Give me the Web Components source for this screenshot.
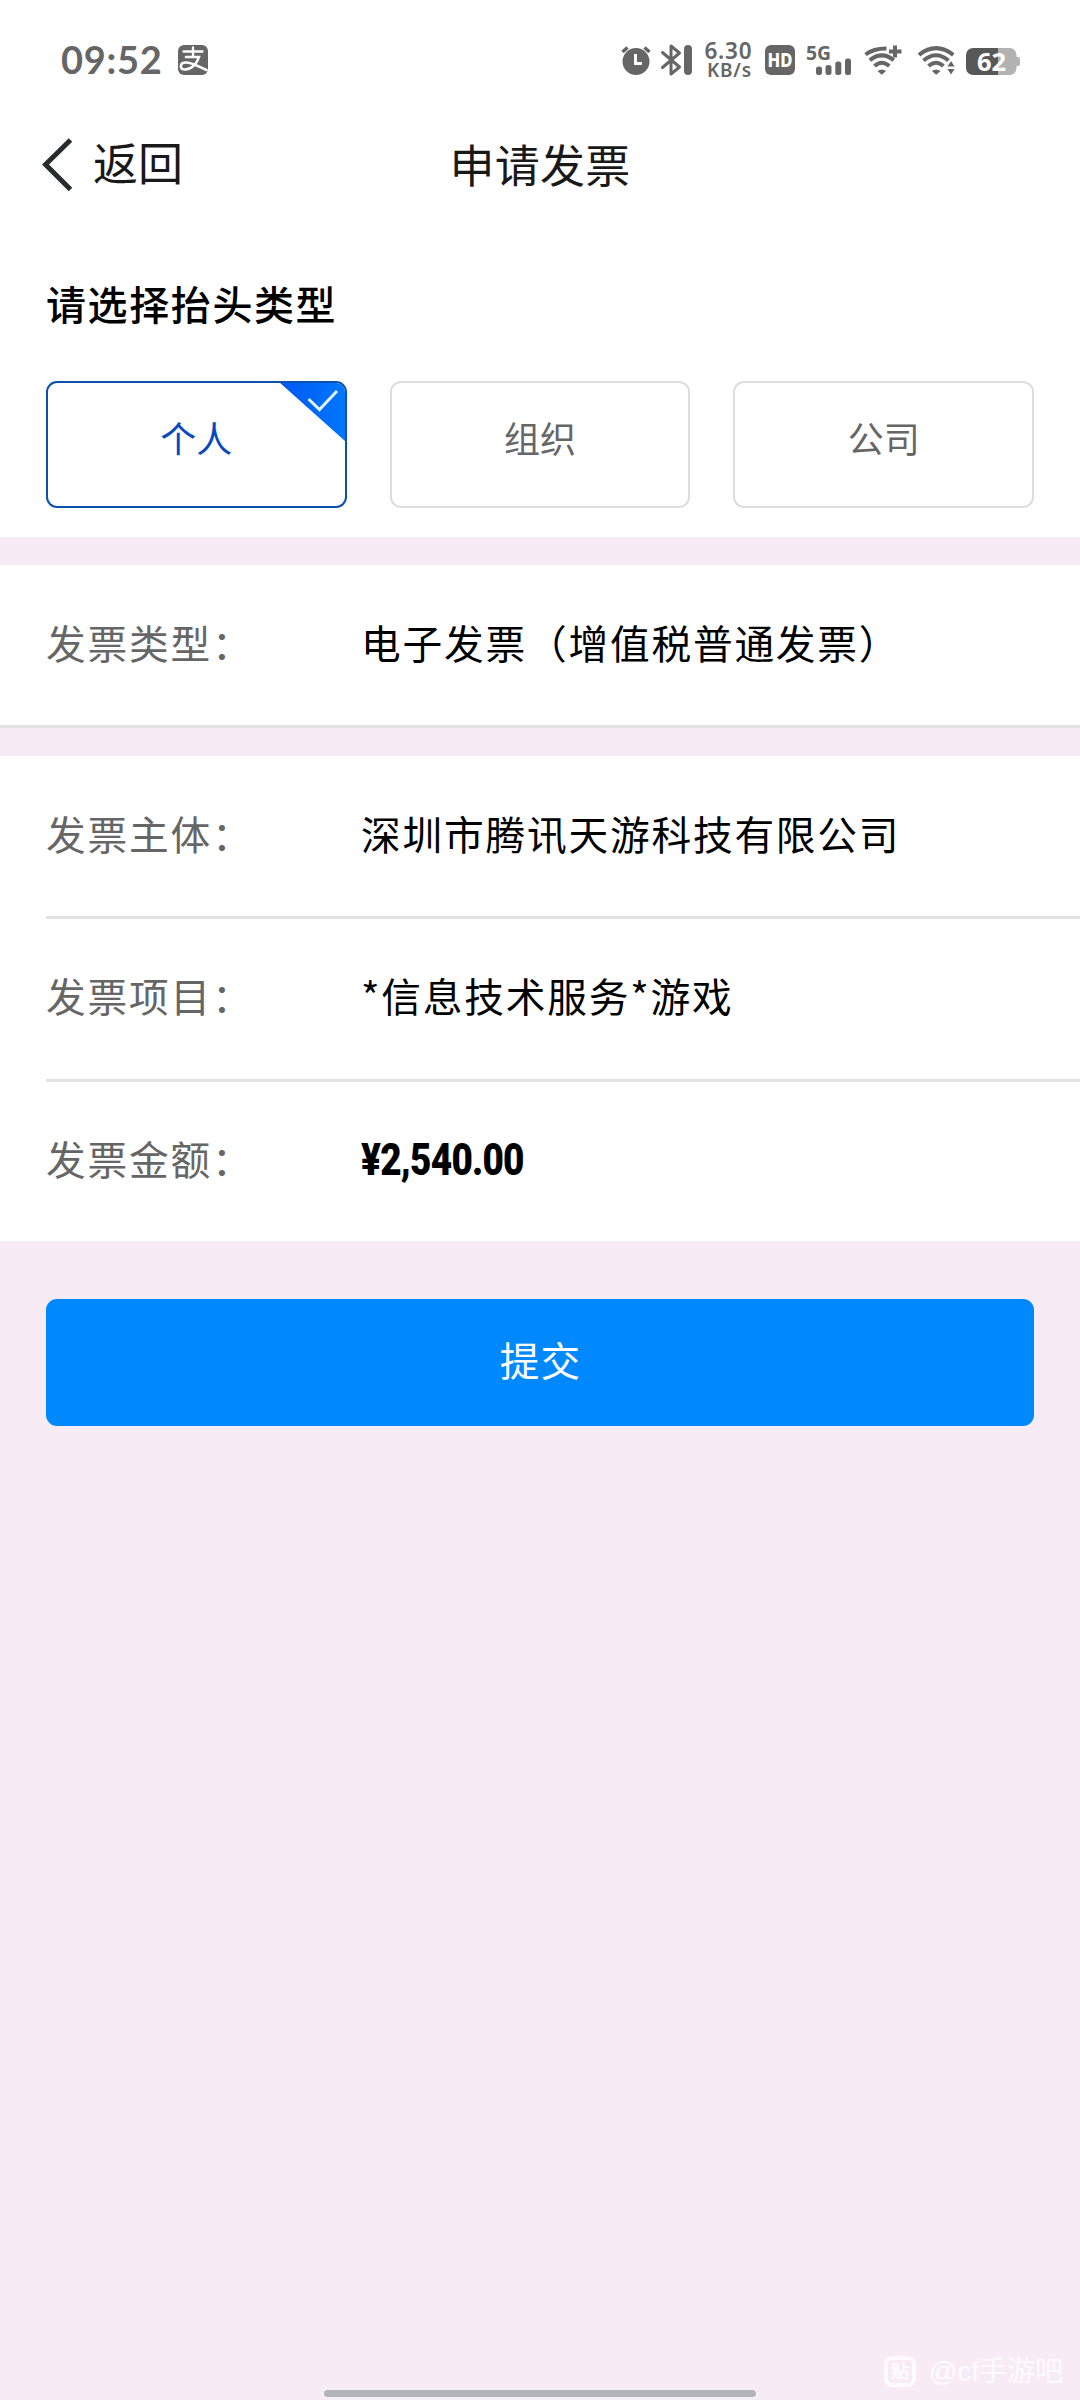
<!DOCTYPE html>
<html lang="zh-CN">
<head>
<meta charset="utf-8">
<meta name="viewport" content="width=1080">
<title>申请发票</title>
<style>
html,body{margin:0;padding:0}
body{background:#f7ecf6;font-family:"Noto Sans CJK SC",sans-serif}
</style>
</head>
<body>
<invoice-page></invoice-page>
<script>
function define(name, html){
  const t = document.createElement('template');
  t.innerHTML = html;
  customElements.define(name, class extends HTMLElement{
    constructor(){
      super();
      this.attachShadow({mode:'open'}).appendChild(t.content.cloneNode(true));
    }
  });
}

define('status-bar', `
<style>
:host{display:flex;justify-content:space-between;height:120px;box-sizing:border-box;padding:30px 60px 0 61px;color:#666;font-family:Lato,sans-serif}
.left{display:flex;gap:15px;height:60px;align-items:center}
.time{font-size:38px;font-weight:700;line-height:40px;letter-spacing:.7px;width:102px;white-space:nowrap;position:relative;top:-1px}
svg{display:block}
</style>
<div class="left">
  <span class="time">09:52</span>
  <svg width="30" height="40" viewBox="178 40 30 40"><rect x="178" y="45" width="30" height="30" rx="6" fill="#666"/><g fill="none" stroke="#fff" stroke-linecap="round"><path stroke-width="2.300" d="M183.500 51.500h19M193 47.500v9"/><path stroke-width="2.600" d="M186 57h13c-2 7-8 12.500-14 12.500-5.500 0-5.500-6.500 0-7 7-.5 13 4 21.500 7.500"/></g></svg>
</div>
<svg width="420" height="60" viewBox="600 30 420 60" font-family="'Noto Sans',sans-serif" fill="#666">
  <circle cx="636" cy="61.500" r="13.500"/>
  <path d="M622.5 52l5-4.500M649.500 52l-5-4.500" stroke="#666" stroke-width="3.500"/>
  <path d="M635.500 54v9.500h6.500" fill="none" stroke="#fff" stroke-width="3"/>
  <path d="M662.500 52.500l17 14.500-8.500 7V46l8.500 7-17 14.500" fill="none" stroke="#666" stroke-width="3" stroke-linejoin="round" stroke-linecap="round"/>
  <rect x="684" y="45" width="8" height="30" rx="4"/>
  <text x="704.500" y="59" font-size="22.500" font-weight="600" textLength="47" lengthAdjust="spacing">6.30</text>
  <text x="707" y="76.500" font-size="19" font-weight="600" textLength="44" lengthAdjust="spacing">KB/s</text>
  <rect x="765" y="45" width="30" height="30" rx="6"/>
  <text x="767.500" y="67" font-size="19" font-weight="800" fill="#fff" textLength="25" lengthAdjust="spacingAndGlyphs">HD</text>
  <text x="806" y="59.500" font-size="20" font-weight="700" textLength="25" lengthAdjust="spacingAndGlyphs">5G</text>
  <rect x="816" y="66.500" width="6" height="8.500" rx="2.500"/><rect x="825.500" y="65" width="6" height="10" rx="2.500"/><rect x="835.300" y="61.500" width="6" height="13.500" rx="2.500"/><rect x="845" y="58.500" width="6" height="16.500" rx="2.500"/>
  <g fill="none" stroke="#666" stroke-width="4">
    <path d="M865.500 54.500Q874 48.300 886.500 48.500M869.800 60.300Q881.800 50.500 893.800 60.300M874.500 66Q881.800 59.500 889.300 66"/>
    <path d="M895 45.500v12M889 51.500h12.500"/>
    <path d="M919 54.800Q936 41.500 953.300 54.800M923.500 60.500Q936 50 948.500 60.500M928.500 66Q936 59.500 943.500 66"/>
  </g>
  <path d="M877.500 71q4.300-3 8.600 0l-4.300 3.800zM931.900 71q4.300-3 8.600 0l-4.300 3.800zM951 61l3.600 5.500h-7.200zM951 74.500l3.600-5.500h-7.200z"/>
  <path d="M998 48h11.500a7 7 0 0 1 7 7v2h1.500q2 0 2 2v5q0 2-2 2h-1.500v2a7 7 0 0 1-7 7H998z" fill="#b2b2b2"/>
  <path d="M998 48h-25a7 7 0 0 0-7 7v13a7 7 0 0 0 7 7h25z" fill="#585858"/>
  <text x="977" y="71" font-size="25.500" font-weight="700" fill="#fff" textLength="29" lengthAdjust="spacing">62</text>
</svg>`);

define('nav-bar', `
<style>
:host{display:grid;grid-template-columns:1fr auto 1fr;height:120px;color:#191919;font-size:45px;line-height:60px}
.back{display:flex;gap:19px;padding:12px 0 0 42px}
svg{display:block;margin-top:5px}
.title{padding-top:14px;letter-spacing:.3px}
</style>
<div class="back"><svg width="32" height="56" viewBox="0 0 32 56"><path d="M28.500 3L3.500 27.500l25 25" fill="none" stroke="#262c2e" stroke-width="5"/></svg><span><slot name="back"></slot></span></div>
<div class="title"><slot></slot></div>`);

define('title-option', `
<style>
:host{display:block;flex:1;position:relative;box-sizing:border-box;height:127px;border:2px solid #ddd;border-radius:11px;color:#666;font-size:36px;line-height:52px;padding-top:28px;text-align:center;overflow:hidden}
:host([selected]){border-color:#0d51ae;color:#0648bd}
svg{display:none;position:absolute;right:-1px;top:-1px}
:host([selected]) svg{display:block}
</style>
<slot></slot>
<svg width="67" height="60" viewBox="0 0 67 60"><defs><linearGradient id="g"><stop stop-color="#0057f2"/><stop offset="1" stop-color="#0078ff"/></linearGradient></defs><path d="M0 0h67v60z" fill="url(#g)"/><path d="M29.500 17L40.500 27.500 58 9" fill="none" stroke="#e2f5ff" stroke-width="3"/></svg>`);

define('title-picker', `
<style>
:host{display:block;height:297px;box-sizing:border-box;padding:33px 46px 0}
h2{margin:0;font-size:40px;font-weight:500;line-height:60px;letter-spacing:1.600px;color:#000}
.opts{display:flex;gap:43px;margin-top:48px}
</style>
<h2><slot name="label"></slot></h2>
<div class="opts"><slot></slot></div>`);

define('info-row', `
<style>
:host{display:flex;font-size:39.700px;line-height:60px;letter-spacing:1.800px;padding:47px 0 0 46px;height:113px;color:#000}
:host([tight]){padding-top:46px}
.k{width:315px;color:#666;flex:none}
.v{white-space:nowrap}
</style>
<div class="k"><slot name="label"></slot></div><div class="v"><slot></slot></div>`);

define('row-group', `
<style>:host{display:block;background:#fff}</style><slot></slot>`);

define('row-line', `
<style>:host{display:block;height:3px;background:#e2e2e2;margin-left:46px}:host([full]){margin-left:0}</style>`);

define('money-text', `
<style>:host{display:inline-block;font-family:Roboto,sans-serif;font-weight:900;font-size:45px;letter-spacing:-.9px;transform:scaleX(.82);transform-origin:0 50%}</style><slot></slot>`);

define('submit-button', `
<style>:host{display:block}button{display:block;width:100%;height:127px;border:0;border-radius:11px;background:#08f;color:#fff;font:39.700px/60px "Noto Sans CJK SC",sans-serif;letter-spacing:1px;padding:0 0 7px 1px}</style><button><slot></slot></button>`);

define('water-mark', `
<style>:host{display:flex;gap:13px;align-items:center;color:#fffafe;font:28px/36px "Liberation Sans","Noto Sans CJK SC",sans-serif;white-space:nowrap}svg{display:block}</style>
<svg width="32" height="32" viewBox="0 0 32 32"><rect x="2" y="2" width="28" height="27" rx="6" fill="none" stroke="#fffafe" stroke-width="4"/><path d="M11 28l5 4 5-4z" fill="#fffafe"/><text x="7" y="21.500" font-family="'Noto Sans CJK SC'" font-size="18" font-weight="700" fill="#fffafe">贴</text></svg>
<span><slot></slot></span>`);

define('invoice-page', `
<style>
:host{display:flex;flex-direction:column;width:1080px;height:2400px;background:#f7ecf6;overflow:hidden}
row-group+row-group{margin-top:28px}
submit-button{margin:58px 46px 0}
.foot{margin-top:auto;display:flex;flex-direction:column}
water-mark{align-self:flex-end;margin-right:17px}
.home{width:432px;height:7px;border-radius:4px;background:#b1b4b8;box-shadow:0 0 0 2px #f3f2f8;margin:0 auto 3px}
</style>
<row-group>
  <status-bar></status-bar>
  <nav-bar><span slot="back">返回</span>申请发票</nav-bar>
  <title-picker><span slot="label">请选择抬头类型</span>
    <title-option selected>个人</title-option><title-option>组织</title-option><title-option>公司</title-option>
  </title-picker>
</row-group>
<row-group>
  <info-row><span slot="label">发票类型：</span>电子发票（增值税普通发票）</info-row>
  <row-line full></row-line>
</row-group>
<row-group>
  <info-row><span slot="label">发票主体：</span>深圳市腾讯天游科技有限公司</info-row>
  <row-line></row-line>
  <info-row tight style="padding-bottom:1px"><span slot="label">发票项目：</span>*信息技术服务*游戏</info-row>
  <row-line></row-line>
  <info-row tight><span slot="label">发票金额：</span><money-text>¥2,540.00</money-text></info-row>
</row-group>
<submit-button>提交</submit-button>
<div class="foot"><water-mark>@cf手游吧</water-mark><div class="home"></div></div>`);
</script>
</body>
</html>
